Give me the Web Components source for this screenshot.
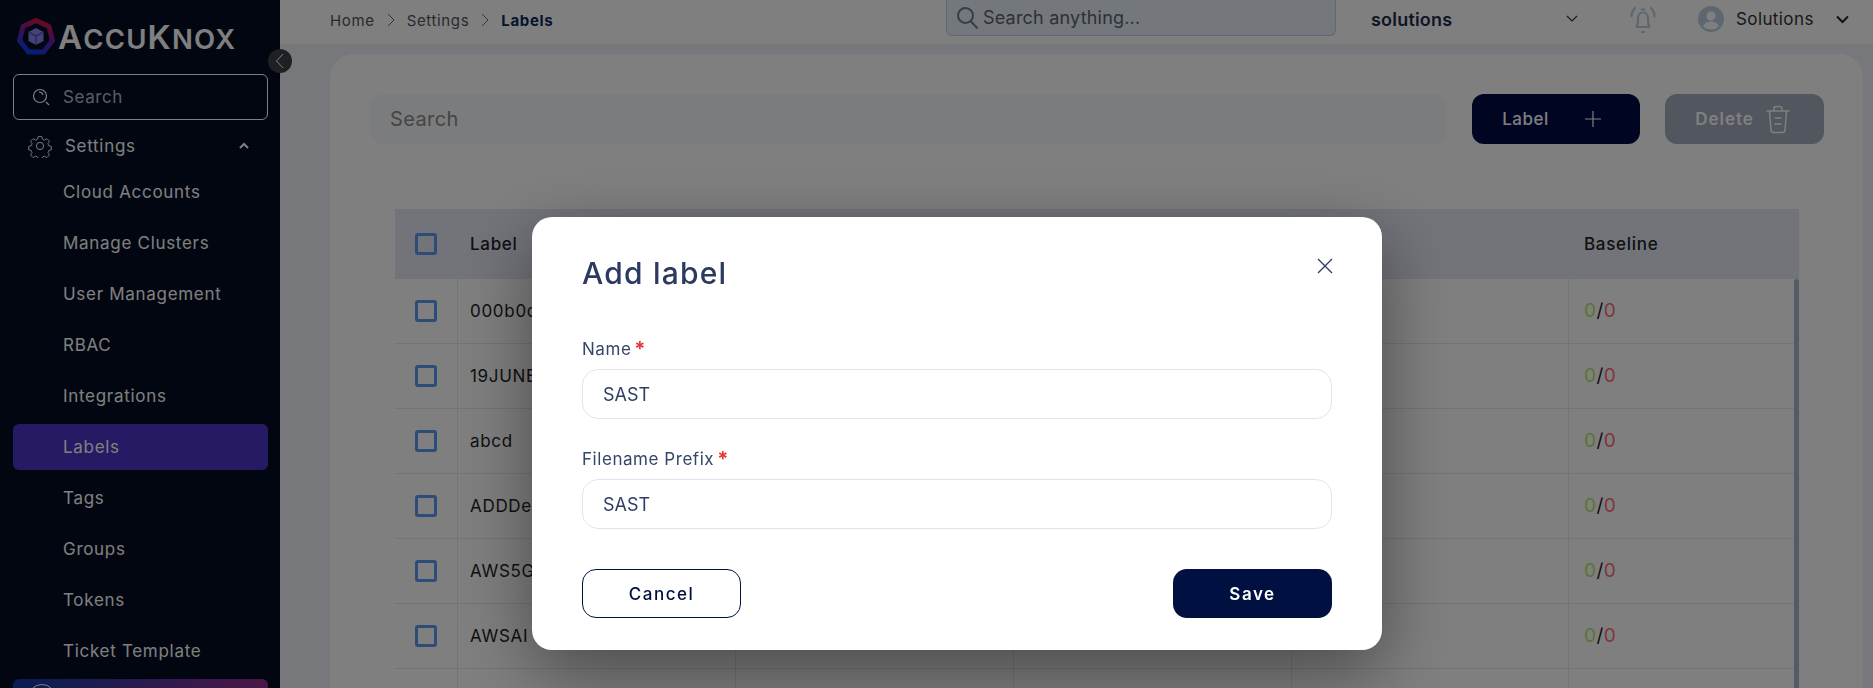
<!DOCTYPE html>
<html lang="en">
<head>
<meta charset="utf-8">
<title>Labels</title>
<style>
  html, body { margin: 0; height: 100%; overflow: hidden; }
  body { font-family: Inter, "Liberation Sans", sans-serif; font-size: 16px; }
</style>
</head>
<body>
<app-shell>
  <app-sidebar slot="side">
    <side-item>Cloud Accounts</side-item>
    <side-item>Manage Clusters</side-item>
    <side-item>User Management</side-item>
    <side-item>RBAC</side-item>
    <side-item>Integrations</side-item>
    <side-item active>Labels</side-item>
    <side-item>Tags</side-item>
    <side-item>Groups</side-item>
    <side-item>Tokens</side-item>
    <side-item>Ticket Template</side-item>
  </app-sidebar>
  <top-bar slot="top"></top-bar>
  <labels-card slot="main"></labels-card>
</app-shell>
<add-label-modal>
  <form-field label="Name">SAST</form-field>
  <form-field label="Filename Prefix">SAST</form-field>
</add-label-modal>

<script>
class AppShell extends HTMLElement {
  constructor() {
    super();
    this.attachShadow({ mode: 'open' });
    this.shadowRoot.innerHTML = `
      <style>
        :host { display: flex; height: 100vh; overflow: hidden; background: #eef1f8; }
        .main { flex: 1; min-width: 0; display: flex; flex-direction: column; }
        .content { flex: 1; min-height: 0; padding: 10px 10px 0 50px; display: flex; }
      </style>
      <slot name="side"></slot>
      <div class="main">
        <slot name="top"></slot>
        <div class="content"><slot name="main"></slot></div>
      </div>
    `;
  }
}

class AppSidebar extends HTMLElement {
  constructor() {
    super();
    this.attachShadow({ mode: 'open' });
    this.shadowRoot.innerHTML = `
      <style>
        :host { display: block; position: relative; width: 280px; flex: none; box-sizing: border-box; padding: 0 12px 0 13px; background: #040c22; color: #fff; }
        .logo { height: 74px; display: flex; align-items: center; gap: 2px; padding: 0 0 0 3px; box-sizing: border-box; }
        .brand { font-weight: 600; font-size: 27.5px; line-height: 1; letter-spacing: 1.2px; color: #fff; }
        .brand b { font-weight: 600; font-size: 33px; }
        .search { height: 46px; box-sizing: border-box; border: 1px solid #fff; border-radius: 6px; display: flex; align-items: center; padding-left: 18px; gap: 12px; font-size: 17px; letter-spacing: .6px; color: #b9bcc4; }
        .settings { height: 44px; margin: 4px 0 1px; display: flex; align-items: center; padding-left: 15px; gap: 13px; font-size: 17px; letter-spacing: .7px; }
        .settings span { flex: 1; }
        .settings svg:last-child { margin-right: 18px; }
        .items { display: flex; flex-direction: column; gap: 5px; }
        .promo { margin-top: 5px; height: 46px; border-radius: 6px; background: linear-gradient(90deg, #0f3aa6, #962f92); padding: 5px 0 0 15px; box-sizing: border-box; }
        .promo i { display: block; width: 26px; height: 26px; border: 1px solid #fff; border-radius: 50%; }
        .toggle { position: absolute; left: 268px; top: 49px; width: 24px; height: 24px; border-radius: 50%; background: #3c4148; display: flex; align-items: center; justify-content: center; }
      </style>
      <div class="logo">
        <svg width="40" height="40" viewBox="0 0 40 40" fill="none">
          <defs><linearGradient id="ring" x1="0.7" y1="0" x2="0.3" y2="1"><stop offset="0" stop-color="#d8123f"/><stop offset=".5" stop-color="#6a1fb0"/><stop offset="1" stop-color="#0a3cf0"/></linearGradient></defs>
          <path d="M20 3.500 33 9.500 36.500 23.500 27.500 35H12.500L3.500 23.500 7 9.500Z" stroke="url(#ring)" stroke-width="5" stroke-linejoin="round"/>
          <path d="M20 11 27.500 15V24L20 28 12.500 24V15Z" fill="#8b84f2"/>
          <path d="M12.500 15 20 19 27.500 15M20 19V28" stroke="#4b44b0" stroke-width="1.2"/>
        </svg>
        <div class="brand"><b>A</b>CCU<b>K</b>NOX</div>
      </div>
      <div class="search">
        <svg width="19" height="19" viewBox="0 0 19 19" fill="none" stroke="#fff" stroke-width="1.2"><circle cx="8" cy="8" r="6.500"/><path d="M7 4a4 4 0 0 1 4 3" /><path d="M14 14l3 3"/></svg>
        Search
      </div>
      <div class="settings">
        <svg width="24" height="24" viewBox="0 0 24 24" fill="none" stroke="#fff" stroke-width="1" stroke-linejoin="round"><circle cx="12" cy="12" r="3.600"/><path d="M10 1.500h4l.7 3 2.300 1 2.700-1.600 2.800 2.800-1.700 2.700 1 2.300 2.700.7v4l-2.700.7-1 2.300 1.700 2.700-2.800 2.800-2.700-1.700-2.300 1-.7 2.800h-4l-.7-2.800-2.300-1-2.700 1.700-2.800-2.800 1.700-2.700-1-2.300-2.700-.7v-4l2.700-.7 1-2.300-1.700-2.700 2.800-2.800 2.700 1.600 2.300-1z" transform="translate(1.200 1.200) scale(.9)"/></svg>
        <span>Settings</span>
        <svg width="12" height="8" viewBox="0 0 12 8" fill="none" stroke="#fff" stroke-width="2"><path d="M2 6l4-4 4 4"/></svg>
      </div>
      <div class="items"><slot></slot></div>
      <div class="promo"><i></i></div>
      <div class="toggle"><svg width="10" height="16" viewBox="0 0 10 16" fill="none" stroke="#fff" stroke-width="1"><path d="M8 1 1.500 8 8 15"/></svg></div>
    `;
  }
}

class SideItem extends HTMLElement {
  constructor() {
    super();
    this.attachShadow({ mode: 'open' });
    this.shadowRoot.innerHTML = `
      <style>
        :host { display: flex; align-items: center; height: 46px; padding-left: 50px; border-radius: 6px; font-size: 17px; letter-spacing: .7px; color: #fff; }
        :host([active]) { background: #4a34c6; }
      </style>
      <slot></slot>
    `;
  }
}

class TopBar extends HTMLElement {
  constructor() {
    super();
    this.attachShadow({ mode: 'open' });
    this.shadowRoot.innerHTML = `
      <style>
        :host { display: flex; align-items: flex-start; height: 44px; flex: none; background: #fff; color: #26324a; }
        .crumbs { flex: 1; display: flex; align-items: center; height: 40px; padding-left: 50px; gap: 12px; font-size: 15px; letter-spacing: .65px; color: #4f5560; }
        .crumbs b { font-weight: 700; color: #062a5c; }
        .find { width: 390px; height: 36px; box-sizing: border-box; border: 1px solid #bcd3f0; border-top: 0; border-radius: 0 0 6px 6px; background: #e8eef8; display: flex; align-items: center; padding-left: 9px; gap: 4px; font-size: 18px; letter-spacing: .2px; color: #5a6270; }
        .ws { width: 215px; margin-left: 35px; height: 38px; display: flex; align-items: center; justify-content: space-between; font-weight: 600; font-size: 18px; letter-spacing: .2px; color: #1f2c4c; }
        .bell { margin-left: 42px; height: 40px; display: flex; align-items: center; }
        .user { margin-left: 40px; height: 38px; display: flex; align-items: center; gap: 12px; font-size: 17px; letter-spacing: .4px; color: #333; }
        .user span { width: 79px; white-space: nowrap; }
        .user svg:last-child { margin-left: 9px; }
        .end { width: 24px; }
      </style>
      <div class="crumbs">
        <span>Home</span>
        <svg width="8" height="14" viewBox="0 0 8 14" fill="none" stroke="#6a6f78" stroke-width="1"><path d="M1 1l6 6-6 6"/></svg>
        <span>Settings</span>
        <svg width="8" height="14" viewBox="0 0 8 14" fill="none" stroke="#6a6f78" stroke-width="1"><path d="M1 1l6 6-6 6"/></svg>
        <b>Labels</b>
      </div>
      <div class="find">
        <svg width="23" height="24" viewBox="0 0 23 24" fill="none" stroke="#6b7c94" stroke-width="2"><circle cx="9.500" cy="9.500" r="7.500"/><path d="M15 15.500l6.500 7"/></svg>
        <span>Search anything...</span>
      </div>
      <div class="ws">
        <span>solutions</span>
        <svg width="12" height="8" viewBox="0 0 12 8" fill="none" stroke="#333" stroke-width="1.2" style="margin-right:8px"><path d="M1 1l5 5 5-5"/></svg>
      </div>
      <div class="bell">
        <svg width="30" height="30" viewBox="0 0 30 30" fill="none" stroke="#bccfe0" stroke-width="2.200" stroke-linecap="round" stroke-linejoin="round"><path d="M8.500 22c1.500-2.500 1.500-5 1.500-8.500 0-3.500 2-6 5-6s5 2.500 5 6c0 3.500 0 6 1.500 8.500z"/><path d="M14 27h2M13.500 4.500h3M7 3C4.500 5.500 3.500 8 3.500 11.500M23 3c2.500 2.500 3.500 5 3.500 8.500"/></svg>
      </div>
      <div class="user">
        <svg width="26" height="26" viewBox="0 0 26 26"><circle cx="13" cy="13" r="13" fill="#bccfe0"/><circle cx="13" cy="10" r="4.500" fill="#fff"/><path d="M5 20c2-3.500 5-4.500 8-4.500s6 1 8 4.500c-2 2.500-5 3.500-8 3.500s-6-1-8-3.500z" fill="#fff"/></svg>
        <span>Solutions</span>
        <svg width="13" height="9" viewBox="0 0 13 9" fill="none" stroke="#222" stroke-width="2"><path d="M1 1.500l5.500 5.500 5.500-5.500"/></svg>
      </div>
      <div class="end"></div>
    `;
  }
}

class LabelsCard extends HTMLElement {
  constructor() {
    super();
    this.attachShadow({ mode: 'open' });
    this.shadowRoot.innerHTML = `
      <style>
        :host { display: block; flex: 1; min-width: 0; box-sizing: border-box; padding: 40px 39px 0 40px; background: #fff; border-radius: 24px 24px 0 0; }
        .tools { display: flex; height: 50px; gap: 25px; }
        .search { flex: 1; background: #f6f8fd; border-radius: 14px; display: flex; align-items: center; padding-left: 20px; font-size: 20px; letter-spacing: .4px; color: #8b8b8b; }
        button { border: 0; font: inherit; font-weight: 500; border-radius: 12px; color: #fff; display: flex; align-items: center; justify-content: center; padding: 0; }
        .add { width: 168px; background: #000c42; gap: 35px; font-size: 17px; letter-spacing: .5px; padding-right: 8px; }
        .del { width: 159px; background: #a4acbe; gap: 12px; font-weight: 600; font-size: 17px; letter-spacing: 1px; padding-right: 4px; }
        labels-table { margin: 65px 25px 0 25px; }
      </style>
      <div class="tools">
        <div class="search">Search</div>
        <button class="add">Label
          <svg width="18" height="18" viewBox="0 0 18 18" stroke="#fff" stroke-width="1.2"><path d="M9 1v16M1 9h16"/></svg>
        </button>
        <button class="del">Delete
          <svg width="24" height="30" viewBox="0 0 24 30" fill="none" stroke="#fff" stroke-width="1.500" stroke-linecap="round"><path d="M1 7h22M8 7V4c0-2 8-2 8 0v3M3.500 7l1.500 19c0 2 1 2.500 3 2.500h8c2 0 3-.5 3-2.500l1.500-19M9 14h6M9 20h6"/></svg>
        </button>
      </div>
      <labels-table></labels-table>
    `;
  }
}

class LabelsTable extends HTMLElement {
  constructor() {
    super();
    this.attachShadow({ mode: 'open' });
    const names = ['000b0c', '19JUNESAST', 'abcd', 'ADDDemo', 'AWS5G', 'AWSAI', ''];
    const rows = names.map(n => `
      <div class="row">
        <div class="cell"><span class="box"></span></div>
        <div class="cell">${n}</div><div class="cell"></div><div class="cell"></div><div class="cell"></div>
        <div class="cell num">${n ? '<span class="ok">0</span>/<span class="bad">0</span>' : ''}</div>
      </div>`).join('');
    this.shadowRoot.innerHTML = `
      <style>
        :host { display: block; position: relative; color: #222; font-size: 17px; letter-spacing: .7px; }
        .row { display: grid; grid-template-columns: 63px 278px 278px 278px 277px 230px; height: 65px; box-sizing: border-box; border-bottom: 1px solid #dfe8fa; }
        .head { height: 70px; background: #e4e8f4; border-top: 1px solid #dfe8fa; font-weight: 500; }
        .cell { display: flex; align-items: center; box-sizing: border-box; padding-left: 12px; border-right: 1px solid #dfe8fa; }
        .cell:first-child { padding-left: 20px; }
        .cell:last-child { border-right: 0; padding-left: 15px; }
        .num { font-size: 19px; letter-spacing: .5px; padding-bottom: 2px; }
        .box { width: 22px; height: 22px; box-sizing: border-box; border: 3px solid #5a98f0; border-radius: 3px; }
        .ok { color: #b4e86a; }
        .bad { color: #ff6a80; }
        .bar { position: absolute; right: 0; top: 70px; width: 5px; height: 410px; background: #a8b6cc; border-radius: 3px 3px 0 0; }
      </style>
      <div class="row head">
        <div class="cell"><span class="box"></span></div>
        <div class="cell">Label</div><div class="cell"></div><div class="cell"></div><div class="cell"></div>
        <div class="cell">Baseline</div>
      </div>
      ${rows}
      <div class="bar"></div>
    `;
  }
}

class FormField extends HTMLElement {
  constructor() {
    super();
    this.attachShadow({ mode: 'open' });
    this.shadowRoot.innerHTML = `
      <style>
        :host { display: block; }
        .lab { display: flex; height: 24px; align-items: center; gap: 3px; font-size: 17px; letter-spacing: .55px; color: #36466b; }
        .lab i { font-style: normal; font-weight: 700; color: #e5383b; font-size: 20px; line-height: 20px; height: 20px; }
        .val { margin-top: 8px; height: 50px; box-sizing: border-box; border: 1px solid #dfe5f0; border-radius: 16px; display: flex; align-items: center; padding-left: 20px; font-size: 18px; color: #2f3d62; }
      </style>
      <div class="lab"><span></span><i>*</i></div>
      <div class="val"><slot></slot></div>
    `;
  }
  connectedCallback() {
    this.shadowRoot.querySelector('.lab span').textContent = this.getAttribute('label');
  }
}

class AddLabelModal extends HTMLElement {
  constructor() {
    super();
    this.attachShadow({ mode: 'open' });
    this.shadowRoot.innerHTML = `
      <style>
        :host { display: block; position: fixed; inset: 0; background: rgba(0, 0, 0, .5); }
        .dialog { position: absolute; left: 532px; top: 217px; width: 850px; height: 433px; box-sizing: border-box; padding: 38px 50px 0 50px; background: #fff; border-radius: 20px; box-shadow: 0 22px 70px rgba(0, 0, 0, .42); }
        .title { display: flex; justify-content: space-between; align-items: flex-start; height: 42px; font-size: 30px; letter-spacing: 1.2px; font-weight: 500; color: #2b3a5e; }
        .title svg { margin: 2px -2px 0 0; }
        .fields { margin-top: 40px; display: flex; flex-direction: column; gap: 28px; }
        .actions { margin-top: 40px; display: flex; justify-content: space-between; }
        button { width: 159px; height: 49px; border-radius: 14px; font: inherit; font-size: 17px; font-weight: 500; letter-spacing: 1.500px; }
        .cancel { background: #fff; border: 1px solid #001040; color: #001040; }
        .save { background: #001040; border: 0; color: #fff; font-weight: 600; }
      </style>
      <div class="dialog">
        <div class="title">
          <span>Add label</span>
          <svg width="18" height="18" viewBox="0 0 18 18" stroke="#2b3a5e" stroke-width="1.3"><path d="M2 2l14 14M16 2L2 16"/></svg>
        </div>
        <div class="fields"><slot></slot></div>
        <div class="actions">
          <button class="cancel">Cancel</button>
          <button class="save">Save</button>
        </div>
      </div>
    `;
  }
}

customElements.define('app-shell', AppShell);
customElements.define('app-sidebar', AppSidebar);
customElements.define('side-item', SideItem);
customElements.define('top-bar', TopBar);
customElements.define('labels-card', LabelsCard);
customElements.define('labels-table', LabelsTable);
customElements.define('form-field', FormField);
customElements.define('add-label-modal', AddLabelModal);
</script>
</body>
</html>
